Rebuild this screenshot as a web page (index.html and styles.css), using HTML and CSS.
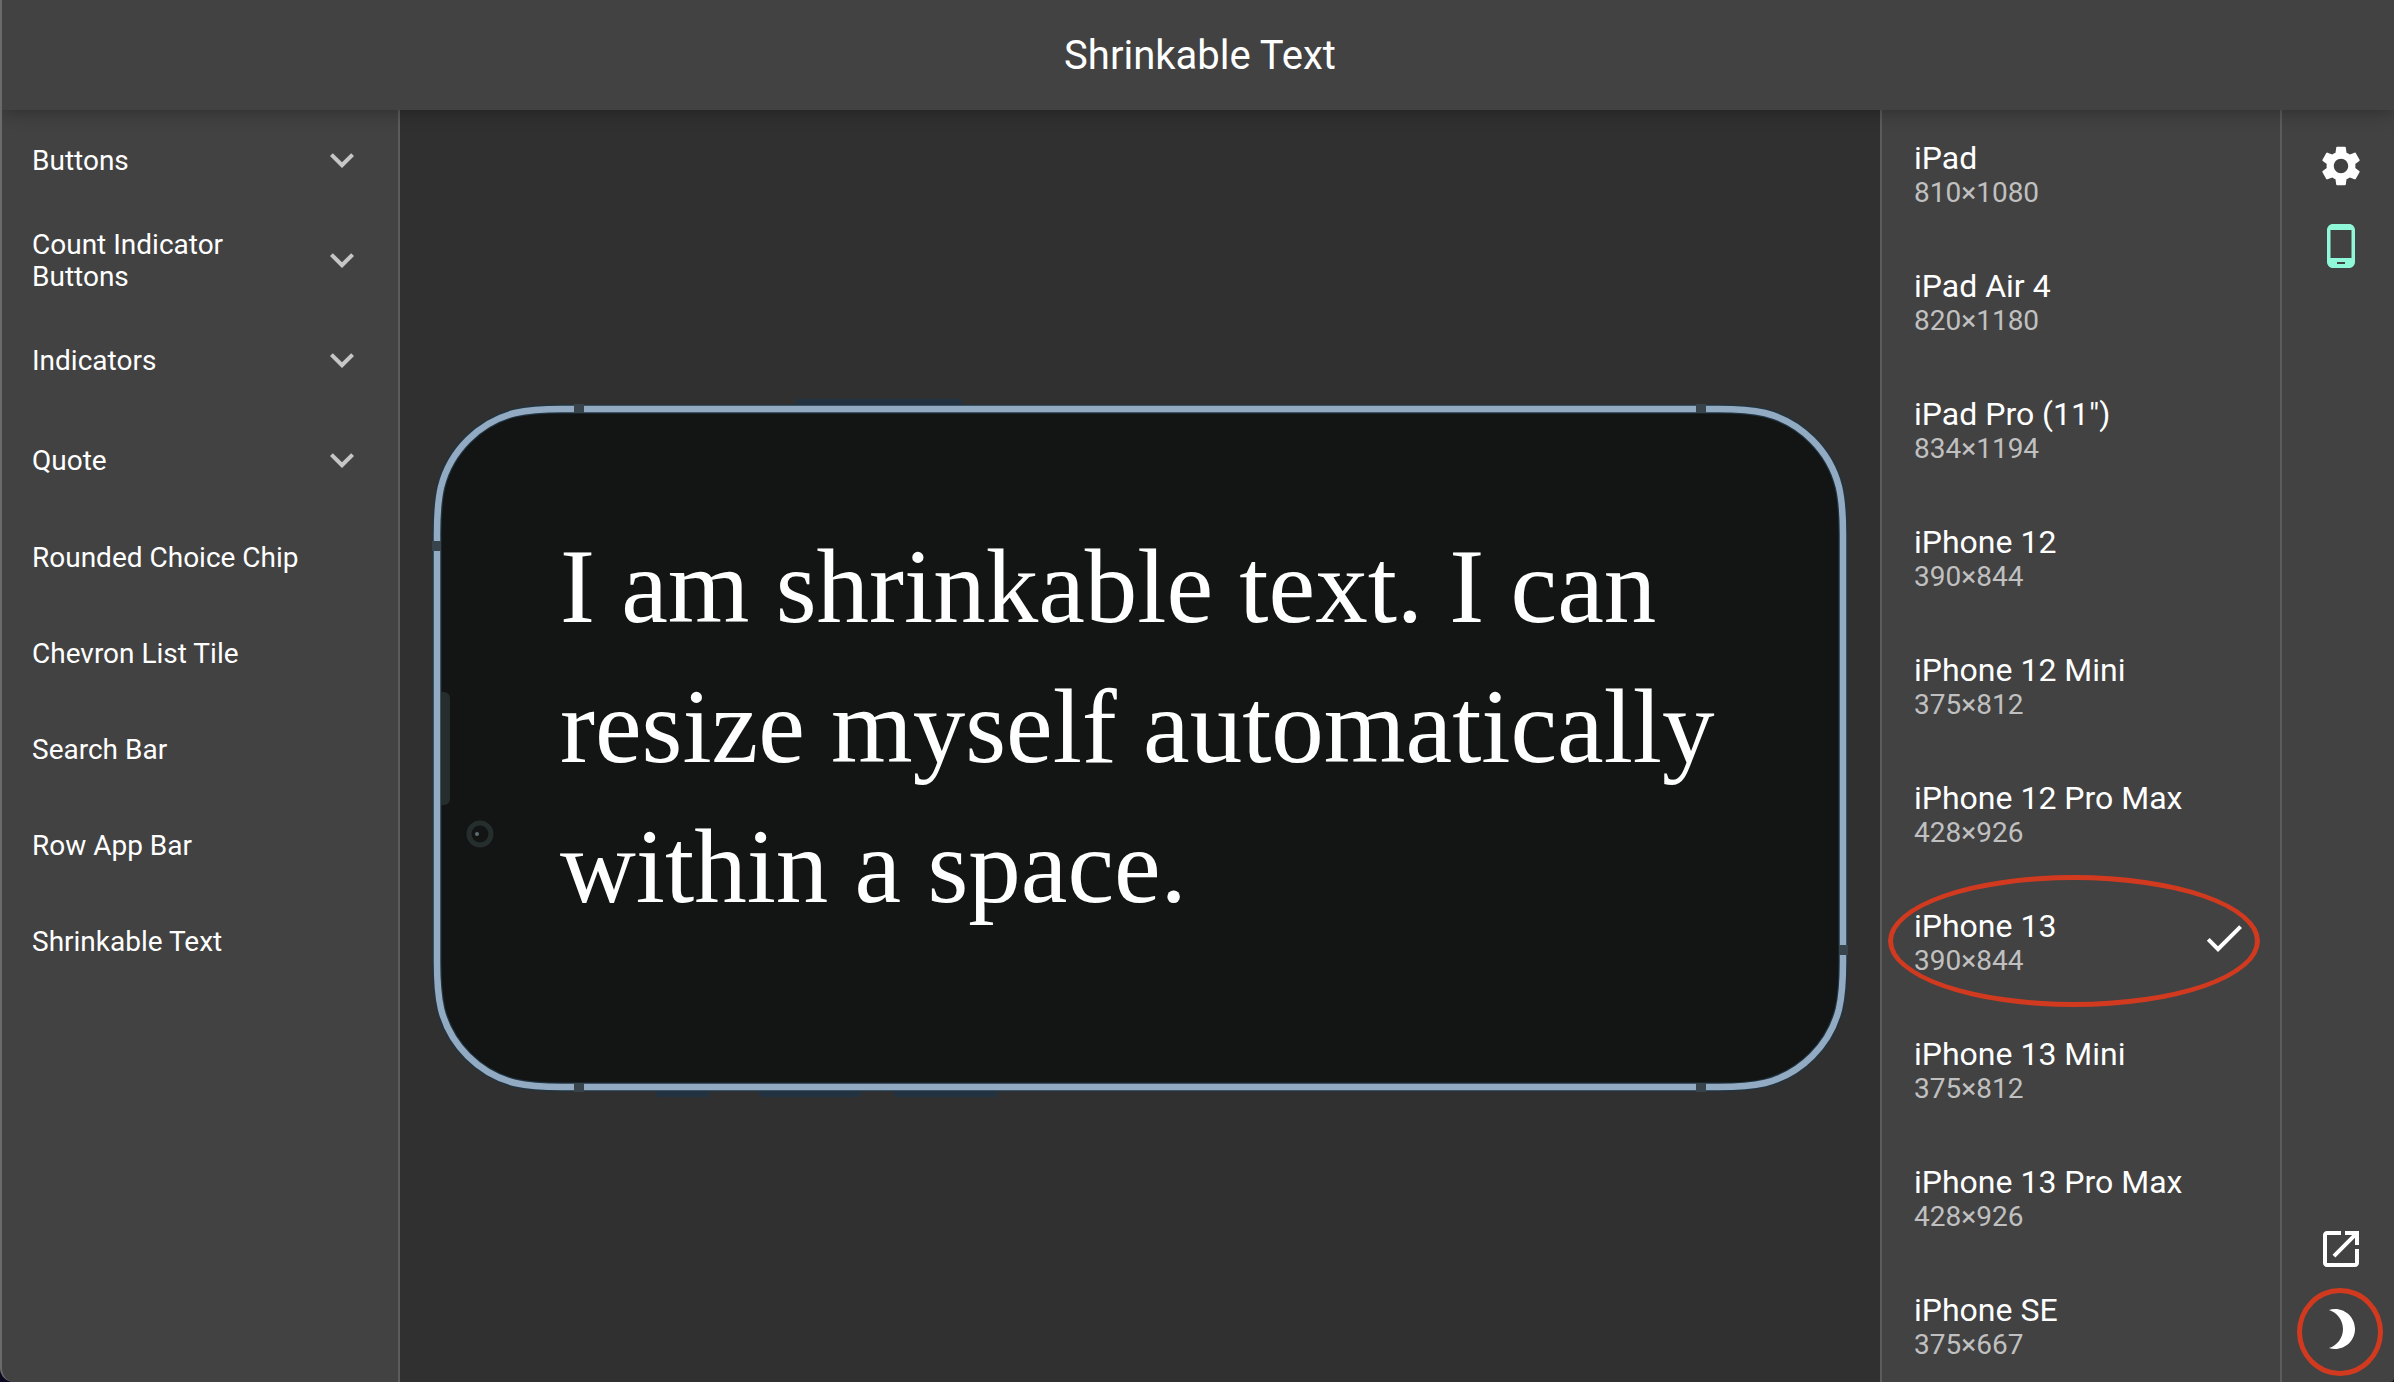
FILE: index.html
```html
<!DOCTYPE html>
<html lang="en">
<head>
<meta charset="utf-8">
<title>Shrinkable Text</title>
<link rel="stylesheet" href="styles.css">
</head>
<body>
<div class="app">
  <header class="app-bar"><h1>Shrinkable Text</h1></header>
  <div class="workspace">
    <nav class="catalog" aria-label="Components">
      <button class="entry group" type="button"><span>Buttons</span><svg class="chevron" viewBox="0 0 24 24"><path d="M16.59 8.59 12 13.17 7.41 8.59 6 10l6 6 6-6z"/></svg></button>
      <button class="entry group" type="button"><span>Count Indicator Buttons</span><svg class="chevron" viewBox="0 0 24 24"><path d="M16.59 8.59 12 13.17 7.41 8.59 6 10l6 6 6-6z"/></svg></button>
      <button class="entry group" type="button"><span>Indicators</span><svg class="chevron" viewBox="0 0 24 24"><path d="M16.59 8.59 12 13.17 7.41 8.59 6 10l6 6 6-6z"/></svg></button>
      <button class="entry group" type="button"><span>Quote</span><svg class="chevron" viewBox="0 0 24 24"><path d="M16.59 8.59 12 13.17 7.41 8.59 6 10l6 6 6-6z"/></svg></button>
      <a class="entry" href="#rounded-choice-chip">Rounded Choice Chip</a>
      <a class="entry" href="#chevron-list-tile">Chevron List Tile</a>
      <a class="entry" href="#search-bar">Search Bar</a>
      <a class="entry" href="#row-app-bar">Row App Bar</a>
      <a class="entry" href="#shrinkable-text">Shrinkable Text</a>
    </nav>
    <main class="stage">
      <div class="phone">
        <svg class="frame" viewBox="0 0 1414 686" aria-hidden="true">
          <g fill="#223240">
            <rect x="363" y="-6" width="166" height="9" rx="2"/>
            <rect x="223" y="684" width="53" height="8" rx="2"/>
            <rect x="326" y="684" width="102" height="8" rx="2"/>
            <rect x="461" y="684" width="103" height="8" rx="2"/>
          </g>
          <path fill="#121514" stroke="#213543" stroke-width="9" d="M4 129C4 109 4.500 97 8 82C17 46 46 17 82 8C97 4.500 109 4 129 4H1285C1305 4 1317 4.500 1332 8C1368 17 1397 46 1406 82C1409.500 97 1410 109 1410 129V557C1410 577 1409.500 589 1406 604C1397 640 1368 669 1332 678C1317 681.500 1305 682 1285 682H129C109 682 97 681.500 82 678C46 669 17 640 8 604C4.500 589 4 577 4 557Z"/>
          <path fill="none" stroke="#93abc2" stroke-width="6.500" d="M4 129C4 109 4.500 97 8 82C17 46 46 17 82 8C97 4.500 109 4 129 4H1285C1305 4 1317 4.500 1332 8C1368 17 1397 46 1406 82C1409.500 97 1410 109 1410 129V557C1410 577 1409.500 589 1406 604C1397 640 1368 669 1332 678C1317 681.500 1305 682 1285 682H129C109 682 97 681.500 82 678C46 669 17 640 8 604C4.500 589 4 577 4 557Z"/>
          <path fill="#37444b" d="M141-1h10v9h-10zM1263-1h10v9h-10zM141 678h10v9h-10zM1263 678h10v9h-10zM-1 136h9v10h-9zM1406 540h9v10h-9z"/>
          <path fill="#262d2d" d="M8 287h3a6 6 0 0 1 6 6v101a6 6 0 0 1-6 6H8z"/>
          <circle cx="47" cy="429" r="11" fill="none" stroke="#262d2d" stroke-width="5"/>
          <circle cx="44" cy="429" r="2" fill="#5f6d70"/>
        </svg>
        <p class="sample">I am shrinkable text. I can resize myself automatically within a space.</p>
      </div>
    </main>
    <aside class="devices" aria-label="Devices">
      <button class="device" type="button"><span class="label"><span class="name">iPad</span><span class="size">810×1080</span></span></button>
      <button class="device" type="button"><span class="label"><span class="name">iPad Air 4</span><span class="size">820×1180</span></span></button>
      <button class="device" type="button"><span class="label"><span class="name">iPad Pro (11")</span><span class="size">834×1194</span></span></button>
      <button class="device" type="button"><span class="label"><span class="name">iPhone 12</span><span class="size">390×844</span></span></button>
      <button class="device" type="button"><span class="label"><span class="name">iPhone 12 Mini</span><span class="size">375×812</span></span></button>
      <button class="device" type="button"><span class="label"><span class="name">iPhone 12 Pro Max</span><span class="size">428×926</span></span></button>
      <button class="device selected" type="button"><span class="label"><span class="name">iPhone 13</span><span class="size">390×844</span></span><svg class="check" viewBox="0 0 24 24"><path d="M9 16.170 4.830 12l-1.420 1.410L9 19 21 7l-1.410-1.410z"/></svg></button>
      <button class="device" type="button"><span class="label"><span class="name">iPhone 13 Mini</span><span class="size">375×812</span></span></button>
      <button class="device" type="button"><span class="label"><span class="name">iPhone 13 Pro Max</span><span class="size">428×926</span></span></button>
      <button class="device" type="button"><span class="label"><span class="name">iPhone SE</span><span class="size">375×667</span></span></button>
    </aside>
    <div class="rail">
      <button class="tool" type="button" aria-label="Settings"><svg viewBox="0 0 24 24"><path d="M19.140 12.940c.040-.3.060-.610.060-.940 0-.320-.020-.640-.070-.940l2.030-1.580c.180-.140.230-.410.120-.610l-1.920-3.320c-.120-.220-.370-.290-.590-.220l-2.390.960c-.5-.380-1.030-.7-1.620-.940l-.360-2.540c-.040-.240-.240-.410-.480-.410h-3.840c-.240 0-.430.170-.470.410l-.360 2.540c-.590.240-1.130.570-1.620.940l-2.390-.960c-.220-.080-.470 0-.590.220L2.740 8.870c-.120.210-.080.470.120.610l2.030 1.580c-.050.3-.090.630-.090.940s.020.640.070.940l-2.030 1.580c-.180.140-.230.410-.120.610l1.920 3.320c.120.220.370.290.590.220l2.390-.960c.5.380 1.030.7 1.620.940l.360 2.540c.050.240.240.410.480.410h3.840c.240 0 .440-.170.470-.410l.360-2.540c.590-.240 1.130-.560 1.620-.940l2.390.960c.220.080.470 0 .590-.220l1.920-3.320c.120-.220.070-.470-.120-.610l-2.010-1.580zM12 15.600c-1.980 0-3.600-1.620-3.600-3.600s1.620-3.600 3.600-3.600 3.600 1.620 3.600 3.600-1.620 3.600-3.600 3.600z"/></svg></button>
      <button class="tool active" type="button" aria-label="Device"><svg viewBox="0 0 24 24"><path d="M16 1H8C6.340 1 5 2.340 5 4v16c0 1.660 1.340 3 3 3h8c1.660 0 3-1.340 3-3V4c0-1.660-1.340-3-3-3zm-2 20h-4v-1h4v1zm3.250-3H6.750V4h10.500v14z"/></svg></button>
      <button class="tool push" type="button" aria-label="Open in new window"><svg viewBox="0 0 24 24"><path d="M19 19H5V5h7V3H5c-1.110 0-2 .9-2 2v14c0 1.100.89 2 2 2h14c1.100 0 2-.9 2-2v-7h-2v7zM14 3v2h3.590l-9.830 9.830 1.410 1.410L19 6.410V10h2V3h-7z"/></svg></button>
      <button class="tool marked" type="button" aria-label="Dark mode"><svg viewBox="0 0 24 24"><path d="M9 2c-1.050 0-2.050.16-3 .46 4.060 1.270 7 5.060 7 9.540s-2.940 8.270-7 9.540c.95.3 1.950.46 3 .46 5.520 0 10-4.480 10-10S14.520 2 9 2z"/></svg></button>
    </div>
  </div>
</div>
</body>
</html>
```
FILE: styles.css
```css
* { box-sizing: border-box; }

body {
  margin: 0;
  background: #0b0a20;
  color: #fff;
  font-family: Roboto, "Liberation Sans", sans-serif;
}

button {
  border: 0;
  background: none;
  color: inherit;
  font: inherit;
  text-align: left;
}

svg { display: block; fill: currentColor; }

.app {
  display: flex;
  flex-direction: column;
  height: 100vh;
  overflow: hidden;
  border-left: 2px solid #6a6a6a;
  border-radius: 0 0 4px 14px;
  background: #424242;
}

.app-bar {
  position: relative;
  z-index: 1;
  display: flex;
  align-items: center;
  justify-content: center;
  flex: 0 0 110px;
  padding: 2px 0 0 4px;
  background: #424242;
  box-shadow: 0 2px 16px rgba(0, 0, 0, .3);
}

.app-bar h1 {
  margin: 0;
  font-size: 40px;
  font-weight: 400;
  line-height: 48px;
}

.workspace { display: flex; flex: 1; min-height: 0; }

.catalog {
  display: flex;
  flex-direction: column;
  flex: 0 0 398px;
  border-right: 2px solid #5c5c5c;
}

.entry {
  display: flex;
  align-items: center;
  justify-content: space-between;
  flex: 0 0 96px;
  gap: 48px;
  padding: 0 32px 0 30px;
  color: inherit;
  font-size: 28px;
  line-height: 32px;
  text-decoration: none;
}

.group { flex-basis: 100px; }

.group span { padding-top: 2px; }

.chevron { flex: none; width: 48px; height: 48px; color: #c6c6c6; }

.stage {
  display: flex;
  align-items: center;
  flex: 1;
  min-width: 0;
  padding: 4px 33px 0;
  background: #303030;
}

.phone {
  position: relative;
  display: flex;
  align-items: center;
  flex: 1;
  aspect-ratio: 1414 / 686;
  padding: 0 110px 42px 127px;
}

.frame {
  position: absolute;
  inset: 0;
  width: 100%;
  height: 100%;
  overflow: visible;
}

.sample {
  position: relative;
  margin: 0;
  font-family: "Liberation Serif", serif;
  font-size: 105px;
  line-height: 140px;
}

.devices {
  display: flex;
  flex-direction: column;
  flex: 0 0 402px;
  overflow: hidden;
  border: solid #5c5c5c;
  border-width: 0 2px;
}

.device {
  position: relative;
  display: flex;
  align-items: flex-start;
  justify-content: space-between;
  flex: 0 0 128px;
  padding: 30px 32px 0;
}

.label { display: flex; flex-direction: column; }

.name { font-size: 32px; line-height: 36px; }

.size { color: #c0c0c0; font-size: 28px; line-height: 34px; }

.check { width: 48px; height: 48px; margin-top: 6px; }

.selected::after,
.marked::after {
  content: "";
  position: absolute;
  border: 5px solid #d23a20;
  border-radius: 50%;
}

.selected::after { inset: -3px 20px -1px 6px; }

.rail {
  display: flex;
  flex-direction: column;
  align-items: center;
  flex: 0 0 112px;
  padding: 16px 0 13px 6px;
}

.tool {
  position: relative;
  padding: 16px;
}

.tool svg { width: 48px; height: 48px; }

.active { color: #8ff8d9; }

.push { margin-top: auto; }

.marked::after { inset: -1px -2px -7px -4px; }
```
